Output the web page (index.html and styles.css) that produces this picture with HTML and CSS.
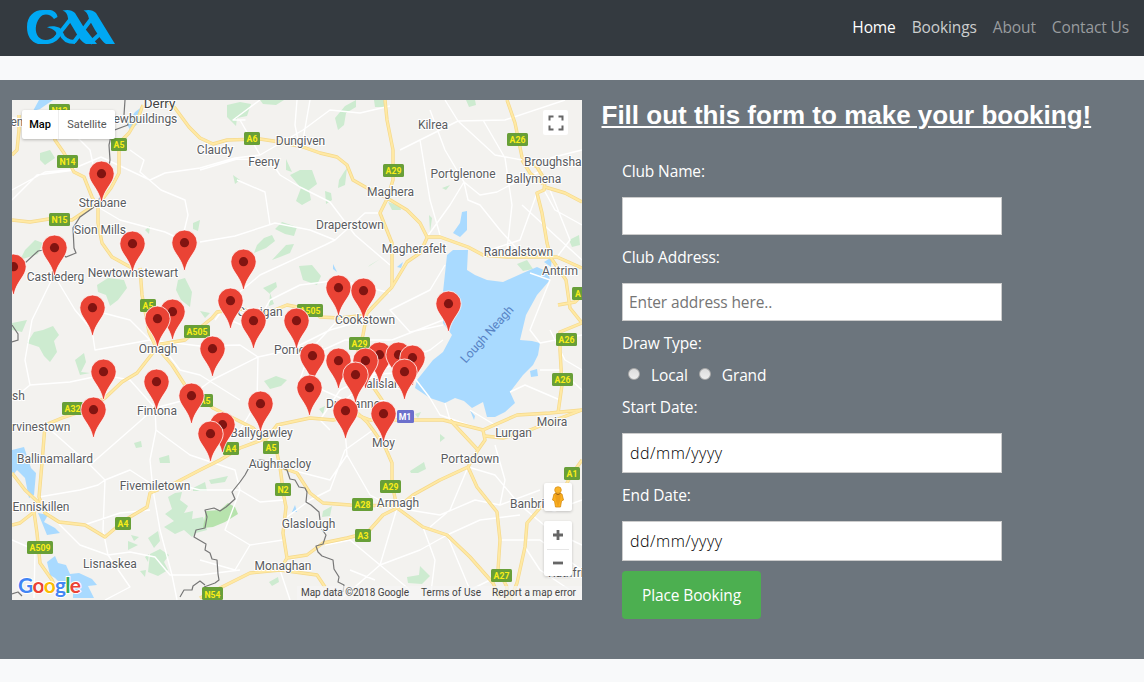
FILE: index.html
```html
<!DOCTYPE html>
<html lang="en">
<head>
<meta charset="utf-8">
<title>GAA Bookings</title>
<link rel="stylesheet" href="styles.css">
</head>
<body>
<nav class="navbar">
  <a class="brand" href="#" aria-label="GAA">
    <svg width="90" height="36" viewBox="26 8 90 36">
      <g fill="#00a8f3">
        <path d="M57.500 16L54 18C50 12.500 43 12 39.500 17C35 23 34.500 31 38.500 36C43 41 51 39.500 56 34C57.500 31 54 28 47 26.200C51 24.500 56 25 60 27L63 31L60 36C55 42 51 43 46 43H38C31 41 27 35 27 26C27 15 34 9 43 9H50C54 9.500 57 12 57.500 16Z"/>
        <path d="M62.500 9.500C67 8.500 72 8.500 75 12L83 25L97 43H86C81 41 78 35 75 30L69 20C67 17 69 12 62.500 9.500Z"/>
        <path d="M83.500 9.500C88 8.500 93 8.500 96 12L115 43H106C101 40 98 33 95 29L90 20C88 17 89 12 83.500 9.500Z"/>
      </g>
      <g fill="none" stroke="#00a8f3">
        <path d="M71.500 17L55 38M92 17L74 41M101 32L90 42" stroke-width="4"/>
        <path d="M61 32C63 38 67 41 75 41M80 31C83 38 88 41 94 41" stroke-width="4"/>
      </g>
    </svg>
  </a>
  <div class="links">
    <a class="link active" href="#">Home</a>
    <a class="link near" href="#">Bookings</a>
    <a class="link" href="#">About</a>
    <a class="link" href="#">Contact Us</a>
  </div>
</nav>

<main class="panel">
  <div class="map">
    <svg class="tiles" viewBox="12 100 570 500" width="570" height="500">
      <defs>
        <g id="pin">
          <path d="M.5-13A12.700 12.700 0 0 0-12.200-.3C-12.200 9-2.500 14-.1 27.500H1.100C3.500 14 13.200 9 13.200-.3A12.700 12.700 0 0 0 .5-13Z" fill="#ea4335" stroke="#fff" stroke-width=".8"/>
          <circle cx=".5" cy="-.3" r="4.600" fill="#811411"/>
        </g>
        <g id="major">
          <path d="M52 110L55 140L64 153L74 172L84 177L92 197L98 207V223L102 243L112 257L132 268M140 268L142 295L149 332L155 345"/>
          <path d="M143 105L138 118L129 133L119 143V173L111 188L101 201L84 212L72 220L49 219L30 222L12 220M19 115V130L17 150L12 155"/>
          <path d="M165 100L175 108L189 127L200 138L213 144L227 140L260 139L280 142L303 147L320 153L337 157L347 165L353 180L367 188L387 198L407 210L420 223L427 237L440 237L468 247L483 255L507 257H557L582 268"/>
          <path d="M385 100L387 120L393 150V180L387 199L380 213L392 243V287M427 238L420 253L407 262L392 287L367 313L363 335L358 350L365 375L382 400L383 430"/>
          <path d="M155 345L185 340L212 318L217 312L240 309L267 313L287 305L313 310L320 317L340 318L367 315M155 345L172 365L185 385L205 401L213 408L233 418L253 428L277 453L280 467L297 473L310 493L323 503L350 505L395 506"/>
          <path d="M155 350L137 373L122 382L105 398L80 412L62 418L45 425L42 463L39 497L45 513L59 522L85 525L105 537L125 520L147 507L150 493L175 483L200 470L220 460L240 448L267 438L277 425L310 418L333 420L357 415L370 420L410 420H443L483 430L517 415L550 413L582 410"/>
          <path d="M12 473L25 490L39 503M12 525L20 523L34 512L37 533L40 563L52 580L60 598M280 467L284 497L286 507L283 533L287 558L280 570L250 573L220 588L200 598M287 558L307 555L323 543L347 538L367 533L383 515L397 508M280 570L317 575L325 587"/>
          <path d="M345 400L352 408L367 422L373 430L385 447L392 463V483L397 508L413 495L440 480L468 467L478 450L485 440L483 430M397 508L423 527L447 535L470 557L493 583L500 598M468 467L477 487L497 512L500 540L498 570L507 587V600"/>
          <path d="M582 460L570 477L560 497L540 508L527 523L525 547L517 583L510 600M507 100L515 123L522 157L537 167L545 180L544 190L537 193L542 213L547 243L551 258M545 187L565 193L582 202M522 160L530 173L543 184M551 258L566 280L570 308L582 323M582 323L560 332V350L562 385L558 413M558 305L575 302L582 295M450 420L478 450M485 436L503 438L525 432L550 422L582 410"/>
        </g>
      </defs>
      <rect x="12" y="100" width="570" height="500" fill="#f3f2ef"/>
      <g fill="#cdebd0">
        <path d="M227 105L240 102L251 104L247 116L237 118L236 126L227 117ZM260 100H284L276 105L263 104ZM345 106L356 100L356 107L346 113L344 125L338 130L335 118ZM374 100H384L386 107L375 107ZM466 100L475 100L476 105L469 107ZM286 159L292 172L286 170ZM290 175L300 170L312 170L317 184L309 190L311 200L302 205L296 201L301 188ZM344 172L347 168L345 185L338 188L339 180ZM325 191L331 193L332 200L326 204ZM233 175L240 180L235 184ZM257 245L264 238L272 235L275 241L266 248L254 253ZM275 229L282 222L297 227L294 236L285 234ZM286 245L294 244L290 253L280 257L272 260ZM370 265L380 259L368 267Z"/>
        <path d="M40 153L50 150L55 158L45 165L40 160ZM25 250L35 240L43 243L38 254L20 260ZM97 285L108 278L124 280L127 288L118 300L110 306L106 295L98 292ZM178 280L185 278L192 292L190 307L181 300L176 290ZM12 323L27 320L22 332L12 330ZM27 343L34 332L43 330L53 326L59 335L54 341L57 352L50 362L44 356L39 347ZM75 360L84 353L86 362L81 372L90 373L80 375ZM200 311L210 313L205 318ZM145 230L150 226L149 234ZM193 223L200 220L198 231L193 229ZM299 266L312 265L321 276L317 285L303 280ZM263 288L276 282L277 287L270 293L274 304L269 306L270 294ZM264 381L276 376L287 380L281 386L270 389ZM319 409L325 406L323 414Z"/>
        <path d="M134 443L141 441L142 447L136 448ZM159 458L169 455L170 463L160 463ZM168 497L175 493L182 492L180 500L188 506L184 513L193 511L192 519L203 517L207 530L196 533L192 537L184 530L175 534L164 527L174 521L165 514L172 509ZM148 538L158 531L160 541L154 548ZM128 541L138 545L128 550ZM131 535L139 537L134 541ZM150 554L160 549L169 555L164 562L168 570L158 576L148 572ZM140 571L146 570L145 577ZM145 557L149 554L148 562ZM193 488L205 482L207 491L193 491ZM209 480L228 476L225 482L211 484ZM410 471L424 462L426 469L418 473L411 473ZM407 577L419 575L420 566L430 576L422 584L408 583ZM323 511L332 506L330 516L322 517ZM269 582L278 577L279 582L272 586ZM569 240L579 235L580 245L572 247ZM517 264L527 260L533 269L523 271ZM429 215L432 218L430 232ZM442 188L450 185L446 190ZM388 202L400 206L401 210L392 210ZM415 414L421 412L418 418ZM440 434L445 438L440 442Z"/>
      </g>
      <path d="M206 511L220 510L228 503L235 507L238 514L225 522L213 527L203 528Z" fill="#a8df9c" opacity=".8"/>
      <g fill="#a9daff">
        <path d="M447 255L453 250H468L467 270L475 275L487 280L503 282L523 273L537 267L548 272L550 280L537 295L526 315L520 340L532 341L540 343L538 355L533 365L523 375L510 392L515 403L505 412L495 417L487 417L483 402L472 408L464 401L455 398L445 403L430 398L415 388L417 380L433 360L443 352L452 335L443 323V292Z"/>
        <path d="M462 212L467 211V230L460 237L453 233L460 223ZM530 371L537 369L538 376L531 377ZM39 100H53L40 109L33 111ZM135 112L143 106L139 123L130 130L127 124ZM470 410L475 416L474 420ZM12 450L24 447L31 468L36 473L34 495L29 498L25 478L17 470L12 476ZM47 562L55 556L58 563L66 565L70 574L79 573L92 579L97 585L88 586L94 598L73 598V589L64 587L55 578L50 575ZM38 513L48 515L44 522L55 528L60 533L47 535ZM397 267L403 262L401 268ZM333 264L337 272L333 269ZM295 505L297 512L292 512ZM544 262L552 257L551 267Z"/>
      </g>
      <g fill="none" stroke="#fff" stroke-width="1.400" stroke-linejoin="round">
        <path d="M12 190L45 172L70 170L101 157L150 180L165 173L200 168L235 158L260 155L303 130L330 110L360 113L390 106M12 200L37 175L75 170M130 150L144 160L140 172L161 190L185 200L188 215L182 240L165 232L120 220L98 207M12 118L60 120L90 150L101 201M200 242L235 236L275 223L310 230L335 240L325 245L260 275L230 300L215 320M335 240L365 213L380 213M200 170L237 159L270 160L280 175L300 187L330 202L355 235L390 265M237 180L265 192L270 225M260 155L240 120L245 120L233 120L260 100M297 100L295 125L300 150M310 100L303 140"/>
        <path d="M54 275L75 310L92 330L95 350L150 340L200 346L240 345L258 357L290 350L330 330L365 320M54 275L32 320L25 360L30 385L12 400M30 385L70 382L103 375L130 380L155 408L185 400L212 380L258 357L257 402L240 430L270 440M155 408L130 430L90 465L45 425M155 408L156 430L150 460L153 490M92 310L130 320L155 345M161 345L180 370L200 375L240 400M390 293L340 280L300 285L270 300L253 330L230 320M338 320L310 350L300 380L345 400L380 370L430 350L443 340M312 355L345 340L392 340L443 320M365 375L410 372L430 398M410 332L390 310L430 290L445 265M410 332L443 325M380 370L340 390L320 420L330 430"/>
        <path d="M445 100L458 121L495 155L522 160M400 150L458 121L505 120L565 100M430 110L445 150L458 172L464 182L480 195L497 192L510 185L543 170M420 140L430 200L440 235M464 182L468 200L480 205L500 230L518 250M464 182L450 205L427 237M483 120L505 158L512 205L507 250M537 193L520 240L490 250M544 190L555 210L582 225M550 190L570 240L557 257M550 158L582 150M522 205L582 260M530 273L550 280L530 330L540 343L582 335M540 370L560 370L582 390M510 392L525 385L560 400M430 398L440 415L483 430M470 410L495 425M445 403L450 420M550 330L565 360L582 370"/>
        <path d="M39 497L80 490L98 485L105 480L130 470L150 483M105 480L90 465M105 480L103 530L108 555L130 587L105 600M108 555L130 552L155 557L170 575L200 575L240 570M39 503L60 525L80 545L108 555M84 525L120 513L150 510M12 540L35 550L34 598M153 490L160 530L172 575L177 600M156 430L190 455L235 470L240 490L260 502L284 500M240 490L200 490L180 485M240 490L225 530L250 545L283 540M250 545L235 570L200 560M283 520L310 500L330 490L345 450L373 430M345 430L347 455L330 480L280 467M347 455L370 495L395 508M397 508L440 515L475 500L500 505L540 490M447 535L480 520L520 515M397 508L380 565L340 600M380 565L420 550L447 535M380 565L350 540L325 545M380 565L410 590M468 467L495 475L520 505L560 508L582 500M500 505L505 480L495 445M520 505L550 530L582 545M500 540L540 540L582 570M423 527L435 560L430 600M447 535L470 590L500 575M468 467L450 510L430 527M525 547L540 570L570 590M350 570L375 580M280 570L290 600"/>
      </g>
      <use href="#major" fill="none" stroke="#f5d98c" stroke-width="3.400" stroke-linejoin="round"/>
      <use href="#major" fill="none" stroke="#ffe9a4" stroke-width="2" stroke-linejoin="round"/>
      <path d="M125 100L124 115L128 125L112 131L109 145L110 160L105 190L94 207L80 217L73 228L74 248L76 253L66 257L62 254L50 249L38 251L24 264L12 268M12 325L18 334L18 340L12 342" fill="none" stroke="#777" stroke-width="1.200"/>
      <path d="M280 467L287 470L290 479L295 480L299 487L305 488L307 492L306 502L311 505L319 512L321 528L326 535L323 544L316 546L318 552L322 556L333 560L334 569L339 577L338 582L344 585L343 592M280 467L270 461L260 460L252 462L245 475L240 482L232 492L235 499L226 507L220 511L214 508L205 510L207 517L205 528L196 530L194 537L206 544L205 550L210 553L212 559L217 560L218 574L219 580L215 583L204 587M205 585L200 581L193 586L192 590L184 590L180 597M12 594L18 592L22 596" fill="none" stroke="#777" stroke-width="1.200" stroke-linejoin="round"/>

      <g class="place">
        <text x="159.500" y="108" class="city">Derry</text><text x="113.500" y="123" text-anchor="start">ewbuildings</text><text x="17" y="126">en</text>
        <text x="215" y="154">Claudy</text><text x="300.500" y="145">Dungiven</text><text x="264" y="166">Feeny</text>
        <text x="433" y="129">Kilrea</text><text x="463" y="178">Portglenone</text><text x="524" y="166" text-anchor="start">Broughsha</text><text x="533.500" y="183">Ballymena</text>
        <text x="390.500" y="196">Maghera</text><text x="350" y="229">Draperstown</text><text x="414" y="253">Magherafelt</text><text x="518.500" y="256">Randalstown</text><text x="560" y="275">Antrim</text>
        <text x="102.500" y="207">Strabane</text><text x="100" y="234">Sion Mills</text><text x="55.500" y="281">Castlederg</text><text x="133" y="277">Newtownstewart</text>
        <text x="260" y="316">Carrigan</text><text x="365" y="324">Cookstown</text><text x="158" y="353">Omagh</text><text x="274" y="354" text-anchor="start">Pomeroy</text>
        <text x="366" y="388" text-anchor="start">alisland</text><text x="326" y="408" text-anchor="start">Dungannon</text><text x="157" y="415">Fintona</text><text x="12" y="431" text-anchor="start">rvinestown</text><text x="12" y="400" text-anchor="start">sh</text>
        <text x="261.500" y="437">Ballygawley</text><text x="383.500" y="447">Moy</text><text x="513.500" y="437">Lurgan</text><text x="552" y="426">Moira</text><text x="470" y="463">Portadown</text>
        <text x="55" y="463">Ballinamallard</text><text x="280" y="468">Aughnacloy</text><text x="155" y="490">Fivemiletown</text><text x="41" y="511">Enniskillen</text><text x="398" y="507">Armagh</text><text x="510" y="508" text-anchor="start">Banbridge</text>
        <text x="308.500" y="528">Glaslough</text><text x="110" y="568">Lisnaskea</text><text x="283" y="570">Monaghan</text><text x="548" y="577" text-anchor="start">Rathfriland</text>
      </g>
      <text class="lake" transform="translate(490 337) rotate(-48)">Lough Neagh</text>

      <g fill="#689f38">
        <rect x="49" y="104" width="21" height="13" rx="1.500"/><rect x="57" y="155" width="21" height="13" rx="1.500"/><rect x="49" y="213" width="21" height="13" rx="1.500"/><rect x="111" y="138" width="16" height="13" rx="1.500"/><rect x="244" y="132" width="16" height="13" rx="1.500"/><rect x="383" y="164" width="21" height="13" rx="1.500"/><rect x="507" y="133" width="21" height="13" rx="1.500"/>
        <rect x="140" y="299" width="16" height="13" rx="1.500"/><rect x="184" y="325" width="26" height="13" rx="1.500"/><rect x="297" y="304" width="26" height="13" rx="1.500"/><rect x="349" y="337" width="21" height="13" rx="1.500"/><rect x="197" y="394" width="16" height="13" rx="1.500"/><rect x="62" y="402" width="21" height="13" rx="1.500"/><rect x="572" y="287" width="21" height="13" rx="1.500"/><rect x="556" y="333" width="21" height="13" rx="1.500"/><rect x="552" y="373" width="21" height="13" rx="1.500"/>
        <rect x="223" y="442" width="16" height="13" rx="1.500"/><rect x="263" y="441" width="16" height="13" rx="1.500"/><rect x="275" y="483" width="16" height="13" rx="1.500"/><rect x="380" y="480" width="21" height="13" rx="1.500"/><rect x="352" y="498" width="21" height="13" rx="1.500"/><rect x="355" y="529" width="16" height="13" rx="1.500"/><rect x="564" y="467" width="16" height="13" rx="1.500"/><rect x="491" y="569" width="21" height="13" rx="1.500"/><rect x="115" y="517" width="16" height="13" rx="1.500"/><rect x="27" y="541" width="26" height="13" rx="1.500"/><rect x="202" y="587" width="21" height="13" rx="1.500"/>
      </g>
      <rect x="397" y="410" width="17" height="13" rx="1.500" fill="#6c70cc"/>
      <g class="shield">
        <text x="59.500" y="113.500">N13</text><text x="67.500" y="164.500">N14</text><text x="59.500" y="222.500">N15</text><text x="119" y="147.500">A5</text><text x="252" y="141.500">A6</text><text x="393.500" y="173.500">A29</text><text x="517.500" y="142.500">A26</text>
        <text x="148" y="308.500">A5</text><text x="197" y="334.500">A505</text><text x="310" y="313.500">A505</text><text x="359.500" y="346.500">A29</text><text x="205" y="403.500">A5</text><text x="72.500" y="411.500">A32</text><text x="578" y="296.500">A</text><text x="566.500" y="342.500">A26</text><text x="562.500" y="382.500">A26</text>
        <text x="231" y="451.500">A4</text><text x="271" y="450.500">A5</text><text x="283" y="492.500">N2</text><text x="390.500" y="489.500">A29</text><text x="362.500" y="507.500">A28</text><text x="363" y="538.500">A3</text><text x="572" y="476.500">A1</text><text x="501.500" y="578.500">A27</text><text x="123" y="526.500">A4</text><text x="40" y="550.500">A509</text><text x="212.500" y="597.500">N54</text><text x="405" y="420" class="motorway">M1</text>
      </g>

      <use href="#pin" x="101" y="174"/><use href="#pin" x="132" y="244"/><use href="#pin" x="184" y="243"/><use href="#pin" x="54" y="248"/><use href="#pin" x="13" y="267"/><use href="#pin" x="243" y="262"/><use href="#pin" x="338" y="288"/><use href="#pin" x="363" y="291"/><use href="#pin" x="230" y="301"/><use href="#pin" x="448" y="304"/><use href="#pin" x="92" y="308"/><use href="#pin" x="172" y="312"/><use href="#pin" x="157" y="319"/><use href="#pin" x="253" y="321"/><use href="#pin" x="296" y="321"/><use href="#pin" x="212" y="349"/><use href="#pin" x="379" y="355"/><use href="#pin" x="398" y="355"/><use href="#pin" x="312" y="356"/><use href="#pin" x="412" y="358"/><use href="#pin" x="338" y="361"/><use href="#pin" x="365" y="361"/><use href="#pin" x="103" y="372"/><use href="#pin" x="404" y="372"/><use href="#pin" x="355" y="375"/><use href="#pin" x="156" y="382"/><use href="#pin" x="309" y="388"/><use href="#pin" x="191" y="396"/><use href="#pin" x="260" y="404"/><use href="#pin" x="93" y="410"/><use href="#pin" x="345" y="411"/><use href="#pin" x="383" y="414"/><use href="#pin" x="222" y="425"/><use href="#pin" x="210" y="434"/>

      <text class="google" x="18" y="593" textLength="63"><tspan fill="#4285f4">G</tspan><tspan fill="#ea4335">o</tspan><tspan fill="#fbbc05">o</tspan><tspan fill="#4285f4">g</tspan><tspan fill="#34a853">l</tspan><tspan fill="#ea4335">e</tspan></text>
      <rect x="297" y="586" width="285" height="14" fill="#f5f5f5" opacity=".7"/>
      <g class="credits"><text x="301" y="596" textLength="108">Map data ©2018 Google</text><text x="421" y="596" textLength="60">Terms of Use</text><text x="492" y="596" textLength="84">Report a map error</text></g>
    </svg>
    <div class="map-type"><button class="type on">Map</button><button class="type">Satellite</button></div>
    <button class="control full" aria-label="Fullscreen"><svg width="16" height="16"><path d="M1.500 5.500V1.500H5.500M10.500 1.500H14.500V5.500M14.500 10.500V14.500H10.500M5.500 14.500H1.500V10.500" fill="none" stroke="#666" stroke-width="2"/></svg></button>
    <button class="control person" aria-label="Street view"><svg width="14" height="22" viewBox="0 0 14 22"><path d="M3 8Q7 6 11 8L12.500 14L10.500 15L9.500 21H4.500L3.500 15L1.500 14Z" fill="#fbb01e" stroke="#d68c12" stroke-width=".8"/><path d="M4 9L5 15L7 21L9 15L10 9" fill="#efa01b"/><circle cx="7" cy="4" r="3.300" fill="#fbb52b" stroke="#d68c12" stroke-width=".7"/><path d="M4.500 7.500Q7 10 9.500 7.500" stroke="#a46813" fill="none"/></svg></button>
    <div class="control zoom"><button aria-label="Zoom in"><svg width="12" height="12"><path d="M6 1V11M1 6H11" stroke="#666" stroke-width="2.800"/></svg></button><button aria-label="Zoom out"><svg width="12" height="12"><path d="M1 6H11" stroke="#666" stroke-width="2.800"/></svg></button></div>
  </div>

  <section class="booking">
    <h1 class="title">Fill out this form to make your booking!</h1>
    <form class="form">
      <label class="label" for="name">Club Name:</label>
      <input class="field" id="name" type="text">
      <label class="label" for="address">Club Address:</label>
      <input class="field" id="address" type="text" placeholder="Enter address here..">
      <span class="label">Draw Type:</span>
      <div class="choices">
        <label class="choice"><input class="radio" type="radio" name="draw">Local</label>
        <label class="choice"><input class="radio" type="radio" name="draw">Grand</label>
      </div>
      <label class="label" for="start">Start Date:</label>
      <input class="field date" id="start" type="text" value="dd/mm/yyyy">
      <label class="label" for="end">End Date:</label>
      <input class="field date" id="end" type="text" value="dd/mm/yyyy">
      <button class="submit" type="button">Place Booking</button>
    </form>
  </section>
</main>
</body>
</html>
```
FILE: styles.css
```css
* { box-sizing: border-box; }
body {
  margin: 0;
  background: #f8f9fa;
  font: 15.5px/24px "Open Sans", "Noto Sans", sans-serif;
  letter-spacing: -.12px;
}
button { border: 0; padding: 0; font: inherit; letter-spacing: inherit; }
svg { display: block; letter-spacing: 0; }

.navbar {
  display: flex;
  align-items: center;
  justify-content: space-between;
  height: 56px;
  padding: 0 15px 3px 26px;
  background: #343a40;
}
.links { display: flex; gap: 16px; }
.link { color: #999c9f; text-decoration: none; }
.link.active { color: #fff; }
.link.near { color: #cccecf; }

.panel {
  display: flex;
  gap: 19.5px;
  height: 579px;
  margin-top: 24px;
  padding: 20px 12px;
  background: #6c757d;
}

.map { position: relative; width: 570px; height: 500px; flex: none; overflow: hidden; }
.place text, .lake, .shield text { text-anchor: middle; }
.place text {
  font: 12px Roboto, sans-serif;
  fill: #5a5c60;
  stroke: #fff;
  stroke-width: 2px;
  paint-order: stroke;
}
.place text[text-anchor="start"] { text-anchor: start; }
.place .city { font-size: 13.5px; fill: #444; }
.lake { font: 12.2px Roboto, sans-serif; fill: #5783c5; }
.shield text { font: bold 8.7px Roboto, sans-serif; fill: #f9ed19; }
.shield .motorway { fill: #fff; }
.google { font: 500 21px Lato, sans-serif; stroke: #fff; stroke-width: 2px; paint-order: stroke; }
.google tspan { font-weight: 700; }
.credits { font: 10px Roboto, sans-serif; fill: #444; }

.map-type {
  position: absolute;
  left: 10px;
  top: 10px;
  display: flex;
  height: 29px;
  background: #fff;
  border-radius: 2px;
  box-shadow: 0 1px 3px rgba(0, 0, 0, .25);
  letter-spacing: 0;
}
.type { width: 56px; background: none; color: #565656; font: 11px Roboto, sans-serif; }
.type.on { width: 37px; color: #000; font-weight: 500; border-right: 1px solid #eee; }
.control {
  position: absolute;
  display: grid;
  place-items: center;
  background: #fff;
  border-radius: 2px;
  box-shadow: 0 1px 3px rgba(0, 0, 0, .2);
}
.full { left: 531px; top: 10px; width: 25px; height: 25px; box-shadow: none; }
.person { left: 532px; top: 383px; width: 28px; height: 28px; }
.zoom { left: 532px; top: 421px; width: 28px; height: 55px; }
.zoom button { display: grid; place-items: center; width: 22px; height: 27px; background: none; }
.zoom button + button { border-top: 1px solid #e6e6e6; }

.title {
  margin: 0;
  color: #fff;
  font: bold 26px/30px "Liberation Sans", Arial, sans-serif;
  letter-spacing: 0;
  text-decoration: underline;
  white-space: nowrap;
}
.form { display: flex; flex-direction: column; width: 400px; padding: 29px 0 0 20.5px; }
.label { color: #fff; margin-bottom: 14px; }
.field {
  width: 380px;
  height: 38px;
  margin-bottom: 10px;
  padding: 0 6px;
  border: 1px solid #ccc;
  background: #fff;
  font: inherit;
  letter-spacing: inherit;
  color: #000;
}
.field::placeholder { color: #757575; }
.date { height: 40px; padding: 0 7px; font-size: 16px; font-weight: 300; letter-spacing: .5px; }
.choices { display: flex; gap: 11px; margin: -6px 0 8px 6px; color: #fff; }
.choice { display: flex; align-items: center; gap: 11px; }
.radio {
  appearance: none;
  width: 12px;
  height: 12px;
  margin: 0 0 3px;
  border: 1px solid #aaa;
  border-radius: 50%;
  background: linear-gradient(#ddd, #eee);
}
.submit {
  width: 139px;
  height: 48px;
  border-radius: 4px;
  background: #4caf50;
  color: #fff;
}
```
